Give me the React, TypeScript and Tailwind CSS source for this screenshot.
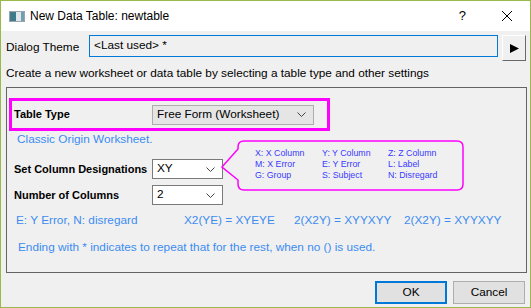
function Chevron() {
  return (
    <svg width="9" height="5" viewBox="0 0 9 5" className="shrink-0">
      <path d="M0.5 0.5 L4.5 4.5 L8.5 0.5" fill="none" stroke="#444" strokeWidth="1" />
    </svg>
  );
}

function Combo({ value, width, gray }: { value: string; width: string; gray?: boolean }) {
  return (
    <div
      className={`${width} h-[20px] flex items-center justify-between pl-[4px] pr-[7px] border ${
        gray ? "bg-[#e5e5e5] border-[#adadad]" : "bg-white border-[#7a7a7a]"
      }`}
    >
      <span className="text-black">{value}</span>
      <Chevron />
    </div>
  );
}

const legend = [
  ["X: X Column", "Y: Y Column", "Z: Z Column"],
  ["M: X Error", "E: Y Error", "L: Label"],
  ["G: Group", "S: Subject", "N: Disregard"],
];

export default function App() {
  return (
    <div className="w-[531px] h-[308px] border border-[#9bb84c] bg-[#f0f0f0] flex flex-col text-[11.8px] text-black font-['Liberation_Sans',sans-serif] overflow-hidden">
      {/* title bar */}
      <div className="h-[30px] bg-white flex items-center shrink-0">
        <div className="ml-[8px] w-[16px] h-[11px] border border-[#9aa5ae] bg-[#e8eef2] flex">
          <div className="w-[6px] h-full bg-[#3e7a8a]" />
          <div className="flex-1 bg-[#dfe7ea]" />
          <div className="w-[3px] h-full bg-[#6fa0b0]" />
        </div>
        <span className="ml-[5px] text-[12px]">New Data Table: newtable</span>
        <span className="ml-auto mr-[36px] text-[13px]">?</span>
        <svg width="10" height="10" viewBox="0 0 10 10" className="mr-[18px]">
          <path d="M0 0 L10 10 M10 0 L0 10" stroke="#000" strokeWidth="1" />
        </svg>
      </div>

      {/* body */}
      <div className="flex-1 flex flex-col px-[4px] pt-[4px]">
        <div className="flex items-start">
          <span className="mt-[4px] ml-[1px] w-[83px] whitespace-nowrap">Dialog Theme</span>
          <div className="w-[409px] h-[22px] border border-[#0078d7] flex items-center pl-[4px]">
            &lt;Last used&gt; *
          </div>
          <div className="ml-[4px] w-[24px] h-[26px] bg-[#f0f0f0] border border-t-white border-l-white border-r-[#696969] border-b-[#696969] flex items-center justify-center">
            <svg width="9" height="9" viewBox="0 0 9 9">
              <path d="M0 0 L9 4.5 L0 9 Z" fill="#000" />
            </svg>
          </div>
        </div>

        <div className="mt-[4px] ml-[1px] h-[17px] flex items-center whitespace-nowrap">
          Create a new worksheet or data table by selecting a table type and other settings
        </div>

        {/* group box */}
        <div className="relative mt-[5px] ml-[1px] w-[521px] h-[186px] border border-[#646464] px-[2px] pt-[10px]">
          <div className="w-[321px] h-[33px] border-[3px] border-[#ff00ff] flex items-center pl-[2px]">
            <span className="font-bold text-[11px] w-[138px] whitespace-nowrap">Table Type</span>
            <Combo value="Free Form (Worksheet)" width="w-[162px]" gray />
          </div>

          <div className="mt-[1px] ml-[8px] h-[16px] text-[#3c8cf0] flex items-center whitespace-nowrap">
            Classic Origin Worksheet.
          </div>

          <div className="mt-[11px] ml-[5px] flex items-center">
            <span className="font-bold text-[11px] w-[138px] whitespace-nowrap">Set Column Designations</span>
            <Combo value="XY" width="w-[71px]" />
          </div>

          <div className="mt-[6px] ml-[5px] flex items-center">
            <span className="font-bold text-[11px] w-[138px] whitespace-nowrap">Number of Columns</span>
            <Combo value="2" width="w-[71px]" />
          </div>

          <div className="mt-[8px] ml-[7px] h-[16px] flex items-center text-[#3c8cf0] whitespace-nowrap">
            <span className="w-[168px]">E: Y Error, N: disregard</span>
            <span className="w-[110px]">X2(YE) = XYEYE</span>
            <span className="w-[110px]">2(X2Y) = XYYXYY</span>
            <span>2(X2Y) = XYYXYY</span>
          </div>

          <div className="mt-[11px] ml-[9px] h-[16px] flex items-center text-[#3c8cf0] whitespace-nowrap">
            Ending with * indicates to repeat that for the rest, when no () is used.
          </div>

          {/* callout */}
          <div className="absolute left-[214px] top-[52px] w-[243px] h-[51px]">
            <svg width="243" height="51" viewBox="0 0 243 51" className="absolute inset-0">
              <path
                d="M23 1 H236 Q242 1 242 7 V44 Q242 50 236 50 H23 Q17 50 17 44 V40 L1 27 L17 9 V7 Q17 1 23 1 Z"
                fill="none"
                stroke="#ff00ff"
                strokeWidth="1.5"
              />
            </svg>
            <div className="absolute left-[34px] top-[8px] grid grid-cols-[67px_66px_70px] text-[8.8px] leading-[11px] text-[#3a3aff] whitespace-nowrap">
              {legend.flat().map((t, i) => (
                <span key={i}>{t}</span>
              ))}
            </div>
          </div>
        </div>

        {/* buttons */}
        <div className="mt-[8px] flex justify-end pr-[1px] gap-[6px]">
          <button className="w-[72px] h-[23px] border-2 border-[#0078d7] bg-[#e1e1e1]">OK</button>
          <button className="w-[72px] h-[23px] border border-[#adadad] bg-[#e1e1e1]">Cancel</button>
        </div>
      </div>
    </div>
  );
}
